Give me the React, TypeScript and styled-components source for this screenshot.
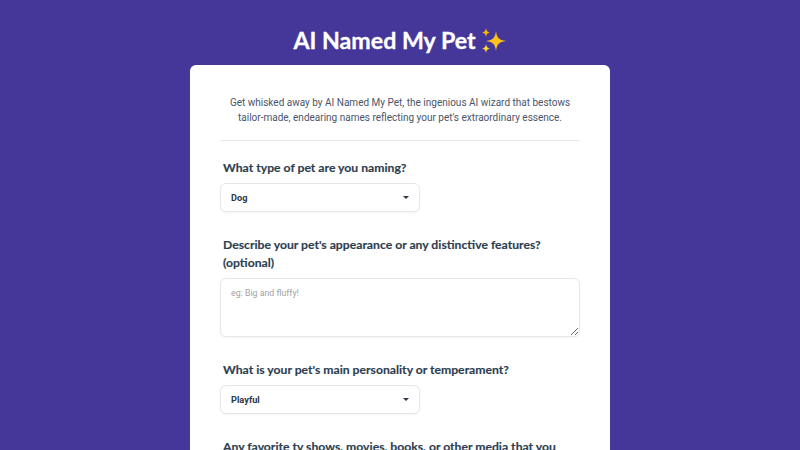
import styled, { createGlobalStyle } from 'styled-components';

const GlobalStyle = createGlobalStyle`
  html, body {
    margin: 0;
    height: 450px;
    overflow: hidden;
    background: #453799;
  }
`;

const Page = styled.main`
  display: flex;
  flex-direction: column;
  align-items: center;
  padding-top: 24px;
`;

const Title = styled.h1`
  display: flex;
  align-items: center;
  gap: 4px;
  height: 33px;
  margin: 0 0 8px;
  font-family: 'Lato', sans-serif;
  font-size: 23.2px;
  font-weight: 700;
  line-height: 33px;
  color: #fff;
  -webkit-text-stroke: 0.3px #fff;
`;

const Card = styled.section`
  box-sizing: border-box;
  width: 420px;
  padding: 30px;
  background: #fff;
  border-radius: 6px;
`;

const Intro = styled.p`
  margin: 0;
  padding-bottom: 15px;
  border-bottom: 1px solid #e5e7eb;
  font-family: 'Roboto', sans-serif;
  font-size: 10px;
  line-height: 15px;
  text-align: center;
  color: #4a5568;
`;

const Field = styled.div`
  margin-top: 18px;

  & + & {
    margin-top: 24px;
  }
`;

const Label = styled.label`
  display: block;
  padding: 0 3px;
  margin-bottom: 6px;
  font-family: 'Lato', sans-serif;
  font-size: 12.2px;
  font-weight: 700;
  line-height: 18px;
  color: #2d3e50;
  -webkit-text-stroke: 0.15px #2d3e50;
`;

const Select = styled.div`
  box-sizing: border-box;
  display: flex;
  align-items: center;
  justify-content: space-between;
  width: 200px;
  height: 29px;
  padding: 0 10px;
  background: #fff;
  border: 1px solid #e5e7eb;
  border-radius: 6px;
  box-shadow: 0 1px 2px rgba(0, 0, 0, 0.05);
  font-family: 'Roboto', sans-serif;
  font-size: 9.2px;
  font-weight: 700;
  color: #2d3748;
`;

const Caret = styled.span`
  width: 0;
  height: 0;
  border-left: 3px solid transparent;
  border-right: 3px solid transparent;
  border-top: 3px solid #2d3748;
`;

const TextArea = styled.textarea`
  box-sizing: border-box;
  display: block;
  width: 360px;
  height: 59px;
  padding: 7px 10px;
  background: #fff;
  border: 1px solid #e5e7eb;
  border-radius: 6px;
  box-shadow: 0 1px 2px rgba(0, 0, 0, 0.05);
  font-family: 'Roboto', sans-serif;
  font-size: 8.8px;
  line-height: 14px;
  outline: none;

  &::placeholder {
    color: #a3a3a3;
  }
`;

function Sparkles() {
  return (
    <svg width="27" height="27" viewBox="0 0 27 27" aria-hidden="true">
      <path d="M16 4 C17 11 19 13 26 14 C19 15 17 17 16 24 C15 17 13 15 6 14 C13 13 15 11 16 4Z" fill="#fcc21b" />
      <path d="M6 1 C6.5 4 7.5 5 10 5.5 C7.5 6 6.5 7 6 10 C5.5 7 4.5 6 2 5.5 C4.5 5 5.5 4 6 1Z" fill="#f7b600" />
      <path d="M6 17 C6.5 20 7.5 21 10 21.5 C7.5 22 6.5 23 6 26 C5.5 23 4.5 22 2 21.5 C4.5 21 5.5 20 6 17Z" fill="#fdd835" />
    </svg>
  );
}

export default function App() {
  return (
    <Page>
      <GlobalStyle />
      <Title>
        AI Named My Pet <Sparkles />
      </Title>
      <Card>
        <Intro>
          Get whisked away by AI Named My Pet, the ingenious AI wizard that bestows
          <br />
          tailor-made, endearing names reflecting your pet's extraordinary essence.
        </Intro>
        <Field>
          <Label>What type of pet are you naming?</Label>
          <Select>
            Dog
            <Caret />
          </Select>
        </Field>
        <Field>
          <Label>
            Describe your pet's appearance or any distinctive features?
            <br />
            (optional)
          </Label>
          <TextArea placeholder="eg: Big and fluffy!" />
        </Field>
        <Field>
          <Label>What is your pet's main personality or temperament?</Label>
          <Select>
            Playful
            <Caret />
          </Select>
        </Field>
        <Field>
          <Label>
            Any favorite tv shows, movies, books, or other media that you
            <br />
            enjoy?
          </Label>
        </Field>
      </Card>
    </Page>
  );
}
